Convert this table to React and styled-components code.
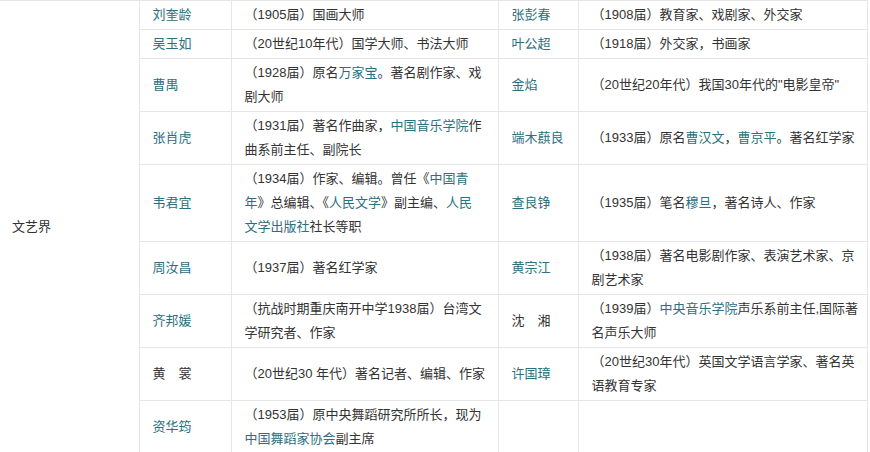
import React from "react";
import styled, { createGlobalStyle } from "styled-components";

const GlobalStyle = createGlobalStyle`
  html, body {
    margin: 0;
    padding: 0;
    background: #fff;
  }
  body {
    font-family: "Liberation Sans", "Noto Sans CJK SC", sans-serif;
    font-size: 13px;
    color: #333;
  }
`;

const Table = styled.table`
  width: 867px;
  table-layout: fixed;
  border-collapse: collapse;
  border-top: 1px solid #e6e6e6;
`;

const Cell = styled.td`
  padding: 2px 0 2px ${(p) => (p.$wide ? 13 : 13)}px;
  line-height: 24px;
  vertical-align: middle;
  white-space: nowrap;
  overflow: hidden;
  border: 1px solid #e6e6e6;
`;

const GroupCell = styled.td`
  padding: 0 0 0 12px;
  vertical-align: middle;
  line-height: 24px;
  border-right: 1px solid #e6e6e6;
`;

const Name = styled(Cell)`
  color: ${(p) => (p.$plain ? "#333" : "#2b7080")};
`;

const Link = styled.span`
  color: #2b7080;
`;

const rows = [
  {
    a: "刘奎龄",
    ad: <>（1905届）国画大师</>,
    b: "张彭春",
    bd: <>（1908届）教育家、戏剧家、外交家</>,
  },
  {
    a: "吴玉如",
    ad: <>（20世纪10年代）国学大师、书法大师</>,
    b: "叶公超",
    bd: <>（1918届）外交家，书画家</>,
  },
  {
    a: "曹禺",
    ad: (
      <>
        （1928届）原名<Link>万家宝</Link>。著名剧作家、戏
        <br />
        剧大师
      </>
    ),
    b: "金焰",
    bd: <>（20世纪20年代）我国30年代的"电影皇帝"</>,
  },
  {
    a: "张肖虎",
    ad: (
      <>
        （1931届）著名作曲家，<Link>中国音乐学院</Link>作
        <br />
        曲系前主任、副院长
      </>
    ),
    b: "端木蕻良",
    bd: (
      <>
        （1933届）原名<Link>曹汉文</Link>，<Link>曹京平</Link>。著名红学家
      </>
    ),
  },
  {
    a: "韦君宜",
    ad: (
      <>
        （1934届）作家、编辑。曾任《<Link>中国青</Link>
        <br />
        <Link>年</Link>》总编辑、《<Link>人民文学</Link>》副主编、
        <Link>人民</Link>
        <br />
        <Link>文学出版社</Link>社长等职
      </>
    ),
    b: "查良铮",
    bd: (
      <>
        （1935届）笔名<Link>穆旦</Link>，著名诗人、作家
      </>
    ),
  },
  {
    a: "周汝昌",
    ad: <>（1937届）著名红学家</>,
    b: "黄宗江",
    bd: (
      <>
        （1938届）著名电影剧作家、表演艺术家、京
        <br />
        剧艺术家
      </>
    ),
  },
  {
    a: "齐邦媛",
    ad: (
      <>
        （抗战时期重庆南开中学1938届）台湾文
        <br />
        学研究者、作家
      </>
    ),
    b: "沈　湘",
    bPlain: true,
    bd: (
      <>
        （1939届）<Link>中央音乐学院</Link>声乐系前主任,国际著
        <br />
        名声乐大师
      </>
    ),
  },
  {
    a: "黄　裳",
    aPlain: true,
    ad: <>（20世纪30 年代）著名记者、编辑、作家</>,
    b: "许国璋",
    bd: (
      <>
        （20世纪30年代）英国文学语言学家、著名英
        <br />
        语教育专家
      </>
    ),
  },
  {
    a: "资华筠",
    ad: (
      <>
        （1953届）原中央舞蹈研究所所长，现为
        <br />
        <Link>中国舞蹈家协会</Link>副主席
      </>
    ),
    b: "",
    bd: null,
  },
];

export default function App() {
  return (
    <>
      <GlobalStyle />
      <Table>
        <colgroup>
          <col style={{ width: 139 }} />
          <col style={{ width: 92 }} />
          <col style={{ width: 267 }} />
          <col style={{ width: 80 }} />
          <col style={{ width: 289 }} />
        </colgroup>
        <tbody>
          {rows.map((r, i) => (
            <tr key={r.a}>
              {i === 0 && <GroupCell rowSpan={rows.length}>文艺界</GroupCell>}
              <Name $plain={r.aPlain}>{r.a}</Name>
              <Cell>{r.ad}</Cell>
              <Name $plain={r.bPlain}>{r.b}</Name>
              <Cell>{r.bd}</Cell>
            </tr>
          ))}
        </tbody>
      </Table>
    </>
  );
}
